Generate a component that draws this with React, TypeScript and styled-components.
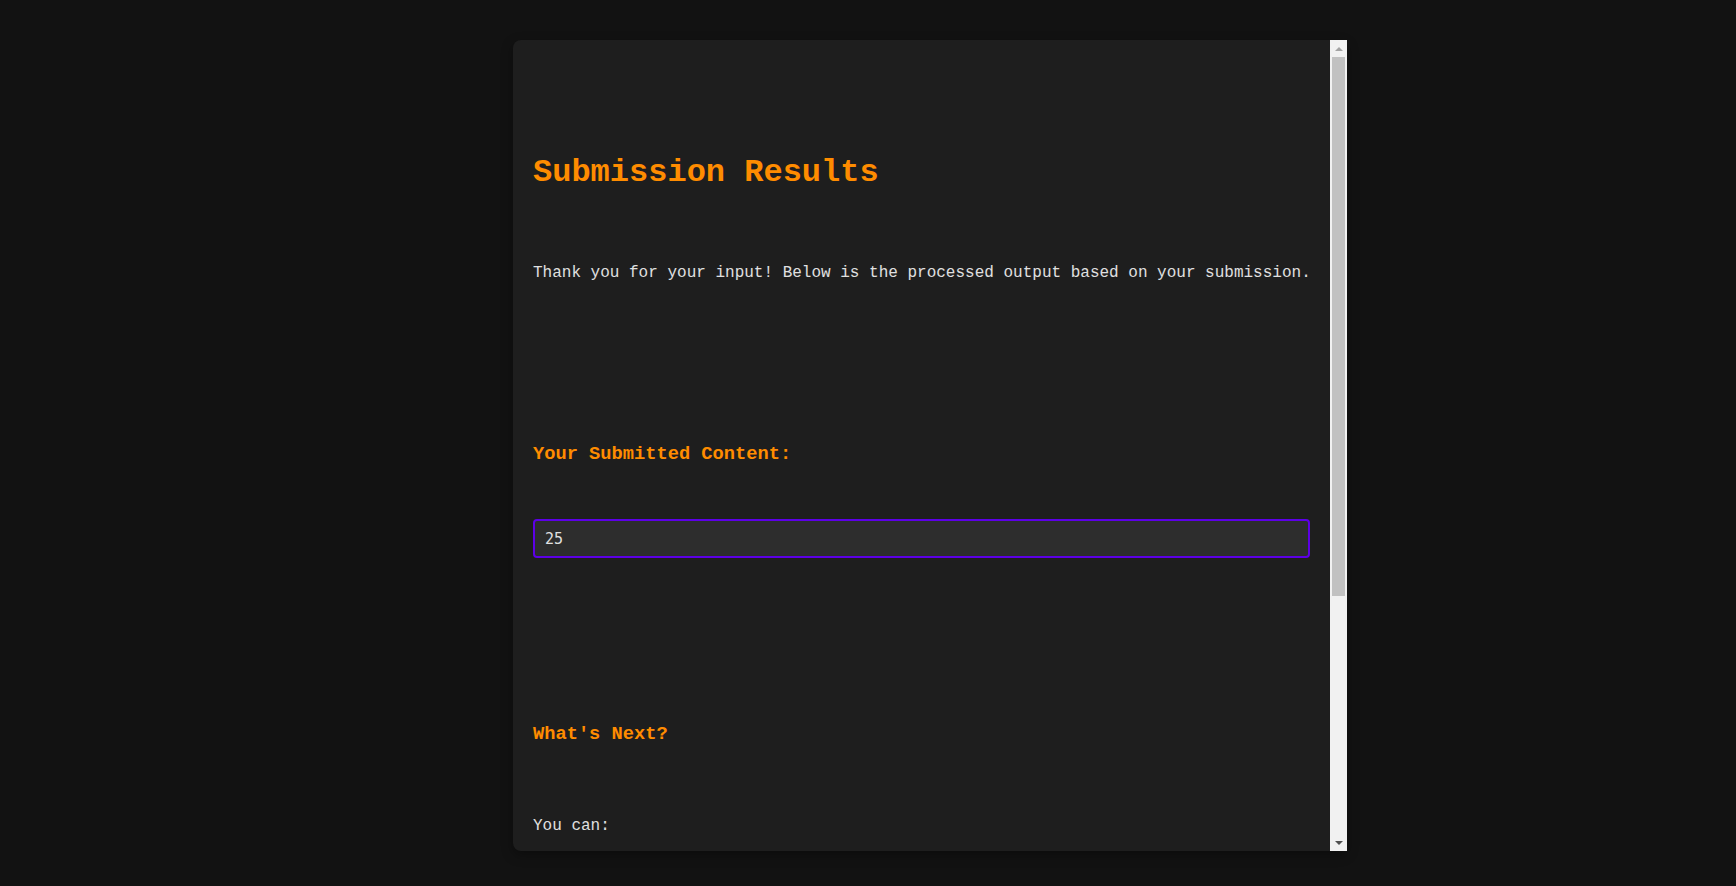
import React from "react";
import styled, { createGlobalStyle } from "styled-components";

const GlobalStyle = createGlobalStyle`
  html, body {
    margin: 0;
    padding: 0;
    background: #121212;
    height: 100%;
    overflow: hidden;
  }
  body {
    font-family: "Liberation Mono", "Courier New", monospace;
    color: #e0e0e0;
  }
`;

const Page = styled.main`
  display: flex;
  align-items: flex-start;
  box-sizing: border-box;
  min-height: 100vh;
  padding: 40px 0 0 513px;
`;

const Card = styled.section`
  display: flex;
  width: 834px;
  height: 811px;
  background: #1e1e1e;
  border-radius: 8px;
  box-shadow: 0 4px 12px rgba(0, 0, 0, 0.35);
`;

const Content = styled.div`
  flex: 1;
  min-width: 0;
  box-sizing: border-box;
  padding: 20px 20px 0;
  overflow: hidden;
`;

const Title = styled.h1`
  margin: 95px 0 0;
  font-size: 32px;
  line-height: 36px;
  font-weight: 700;
  color: #ff8c00;
`;

const Text = styled.p<{ $top: number }>`
  margin: ${(p) => p.$top}px 0 0;
  font-size: 16px;
  line-height: 20px;
  color: #e0e0e0;
  white-space: nowrap;
`;

const SectionTitle = styled.h3<{ $top: number }>`
  margin: ${(p) => p.$top}px 0 0;
  font-size: 18.72px;
  line-height: 22px;
  font-weight: 700;
  color: #ff8c00;
`;

const ContentBox = styled.div`
  box-sizing: border-box;
  margin-top: 54px;
  height: 39px;
  display: flex;
  align-items: center;
  padding: 0 10px;
  background: #2d2d2d;
  border: 2px solid #5d00e6;
  border-radius: 4px;
  font-family: "DejaVu Sans Mono", monospace;
  font-size: 15px;
  color: #e0e0e0;
`;

const ScrollBar = styled.div`
  width: 17px;
  display: flex;
  flex-direction: column;
  background: #f1f1f1;
`;

const ArrowButton = styled.div<{ $dir: "up" | "down" }>`
  height: 17px;
  display: flex;
  align-items: center;
  justify-content: center;
  &::before {
    content: "";
    width: 0;
    height: 0;
    border-left: 4px solid transparent;
    border-right: 4px solid transparent;
    ${(p) =>
      p.$dir === "up"
        ? "border-bottom: 4px solid #a3a3a3;"
        : "border-top: 4px solid #505050;"}
  }
`;

const Track = styled.div`
  flex: 1;
  padding: 0 2px;
`;

const Thumb = styled.div`
  height: 539px;
  background: #c1c1c1;
`;

export default function App() {
  return (
    <>
      <GlobalStyle />
      <Page>
        <Card>
          <Content>
            <Title>Submission Results</Title>
            <Text $top={72}>
              Thank you for your input! Below is the processed output based on your submission.
            </Text>
            <SectionTitle $top={160}>Your Submitted Content:</SectionTitle>
            <ContentBox>25</ContentBox>
            <SectionTitle $top={165}>What's Next?</SectionTitle>
            <Text $top={71}>You can:</Text>
          </Content>
          <ScrollBar>
            <ArrowButton $dir="up" />
            <Track>
              <Thumb />
            </Track>
            <ArrowButton $dir="down" />
          </ScrollBar>
        </Card>
      </Page>
    </>
  );
}
